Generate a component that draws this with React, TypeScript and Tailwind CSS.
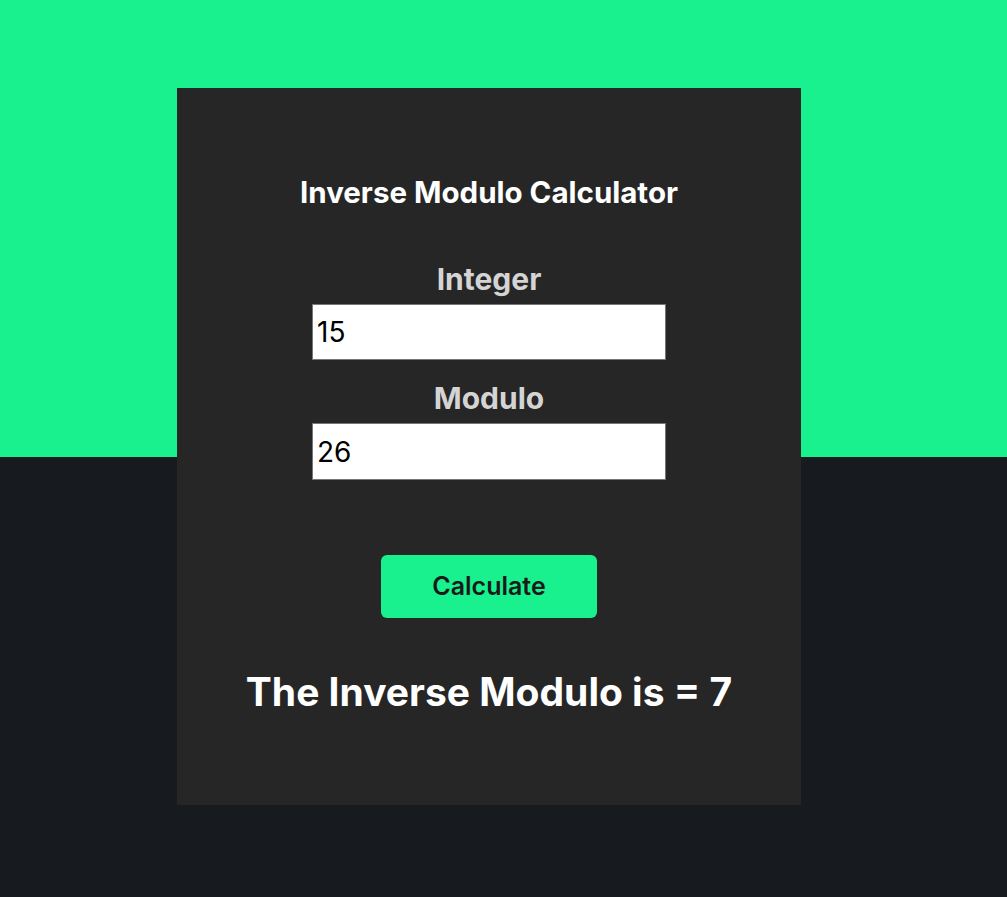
import { useState } from "react";

function modInverse(a: number, m: number): number | null {
  for (let x = 1; x < m; x++) {
    if (((a % m) * x) % m === 1) return x;
  }
  return null;
}

export default function App() {
  const [integer, setInteger] = useState("15");
  const [modulo, setModulo] = useState("26");
  const [result, setResult] = useState<number | null>(7);

  const calculate = () => {
    setResult(modInverse(Number(integer), Number(modulo)));
  };

  return (
    <div
      className="min-h-screen bg-[linear-gradient(to_bottom,#19f18f_457px,#171a1f_457px)] pt-[88px]"
      style={{ fontFamily: "Inter, 'Noto Sans', sans-serif" }}
    >
      <div className="ml-[177px] flex w-[624px] flex-col items-center bg-[#262626] pt-[87px] pb-[89px]">
        <h1 className="text-[29.5px] leading-[34px] font-bold text-white">Inverse Modulo Calculator</h1>

        <label className="mt-[53px] text-[30px] leading-[34px] font-bold text-[#d4d4d4]">Integer</label>
        <input
          className="mt-[8px] h-[56px] w-[354px] border border-[#767676] bg-white px-[4px] text-[28px] text-black outline-none"
          value={integer}
          onChange={(e) => setInteger(e.target.value)}
        />

        <label className="mt-[21px] text-[30px] leading-[34px] font-bold text-[#d4d4d4]">Modulo</label>
        <input
          className="mt-[8px] h-[57px] w-[354px] border border-[#767676] bg-white px-[4px] text-[28px] text-black outline-none"
          value={modulo}
          onChange={(e) => setModulo(e.target.value)}
        />

        <button
          onClick={calculate}
          className="mt-[75px] h-[63px] w-[216px] rounded-[6px] bg-[#19f18f] text-[25px] font-semibold text-[#1a1a1a]"
        >
          Calculate
        </button>

        <div className="mt-[50px] text-[39px] leading-[48px] font-bold text-white">
          The Inverse Modulo is = {result ?? "none"}
        </div>
      </div>
    </div>
  );
}
